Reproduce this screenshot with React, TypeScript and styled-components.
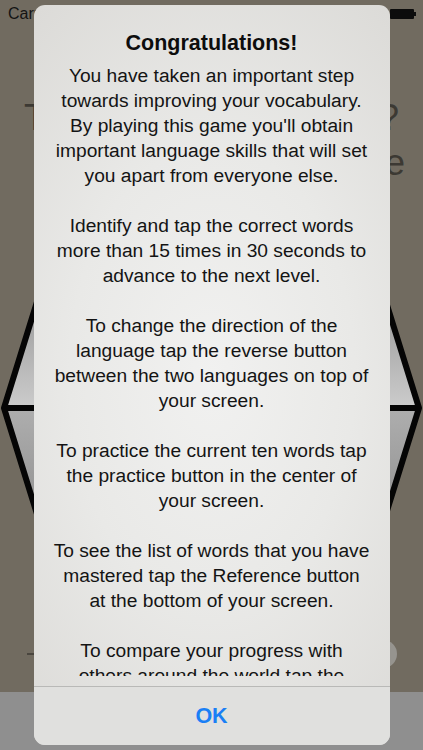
import React from 'react';
import styled, { createGlobalStyle } from 'styled-components';

const GlobalStyle = createGlobalStyle`
  html, body {
    margin: 0;
    padding: 0;
    overflow: hidden;
    background: #716b60;
  }
  #root {
    height: 750px;
  }
`;

const paragraphs = [
  "You have taken an important step\ntowards improving your vocabulary.\nBy playing this game you'll obtain\nimportant language skills that will set\nyou apart from everyone else.",
  'Identify and tap the correct words\nmore than 15 times in 30 seconds to\nadvance to the next level.',
  'To change the direction of the\nlanguage tap the reverse button\nbetween the two languages on top of\nyour screen.',
  'To practice the current ten words tap\nthe practice button in the center of\nyour screen.',
  'To see the list of words that you have\nmastered tap the Reference button\nat the bottom of your screen.',
  'To compare your progress with\nothers around the world tap the\nLeaderboard button at the bottom of\nyour screen.',
];

const Screen = styled.div`
  position: relative;
  width: 423px;
  height: 750px;
  display: flex;
  flex-direction: column;
  background: #716b60;
  font-family: 'Liberation Sans', Arial, sans-serif;
  overflow: hidden;
`;

const StatusBar = styled.div`
  height: 27px;
  display: flex;
  align-items: center;
  justify-content: space-between;
  padding: 0 7px 0 8px;
`;

const Carrier = styled.span`
  font-size: 16px;
  color: #141414;
`;

const Battery = styled.div`
  display: flex;
  align-items: center;
`;

const BatteryBody = styled.div`
  width: 24px;
  height: 10px;
  background: #0c0c0c;
  border-radius: 1px;
`;

const BatteryNub = styled.div`
  width: 2px;
  height: 4px;
  background: #0c0c0c;
`;

const Main = styled.div`
  flex: 1;
  display: flex;
  flex-direction: column;
`;

const PromptLine = styled.div<{ $top: number; $right: number; $align: string }>`
  margin-top: ${p => p.$top}px;
  padding: 0 ${p => p.$right}px 0 24px;
  display: flex;
  justify-content: ${p => p.$align};
  font-size: 36px;
  line-height: 45px;
  color: #3c3933;
`;

const HexRow = styled.div`
  margin-top: 83px;
  height: 280px;
  display: flex;
  justify-content: space-between;
`;

const ProgressRow = styled.div`
  margin-top: 92px;
  height: 28px;
  display: flex;
  align-items: center;
  padding: 0 26px 0 27px;
`;

const Track = styled.div`
  flex: 1;
  height: 2px;
  background: #4a463f;
`;

const Knob = styled.div`
  width: 28px;
  height: 28px;
  border-radius: 50%;
  background: #96948f;
`;

const TabBar = styled.div`
  height: 58px;
  background: #8f8f8f;
`;

const Overlay = styled.div`
  position: absolute;
  inset: 0;
  display: flex;
  justify-content: center;
  padding-top: 5px;
`;

const Alert = styled.div`
  width: 356px;
  height: 740px;
  border-radius: 11px;
  overflow: hidden;
  display: flex;
  flex-direction: column;
  background: radial-gradient(ellipse 80% 62% at 50% 50%, #f1f1f0 0%, #e9e9e7 50%, #dcdbd8 100%);
`;

const AlertBody = styled.div`
  flex: 1;
  min-height: 0;
  display: flex;
  flex-direction: column;
  padding: 25px 12px 10px;
`;

const Title = styled.div`
  font-size: 21.5px;
  line-height: 26px;
  font-weight: 700;
  text-align: center;
  color: #0d0d0d;
  margin-bottom: 6.5px;
`;

const Message = styled.div`
  flex: 1;
  min-height: 0;
  overflow: hidden;
`;

const Paragraph = styled.p`
  margin: 0 0 25px;
  font-size: 19.2px;
  line-height: 25px;
  text-align: center;
  white-space: pre;
  color: #141414;
`;

const Separator = styled.div`
  height: 1px;
  background: #b9b9b7;
`;

const AlertButton = styled.button`
  height: 58px;
  border: 0;
  padding: 0;
  background: #e0e0de;
  font-family: inherit;
  font-size: 21.5px;
  font-weight: 700;
  color: #1a7ff5;
  cursor: pointer;
`;

const Hexagon = ({ side }: { side: 'left' | 'right' }) => {
  const w = 46;
  const tipX = side === 'left' ? 4 : w - 4;
  const baseX = side === 'left' ? w : 0;
  const id = `hex-${side}`;
  return (
    <svg width={w} height={280} viewBox={`0 0 ${w} 280`}>
      <defs>
        <linearGradient id={`${id}-up`} x1="0" y1="0" x2="0" y2="1">
          <stop offset="0" stopColor="#8d8d8d" />
          <stop offset="1" stopColor="#cccccc" />
        </linearGradient>
        <linearGradient id={`${id}-down`} x1="0" y1="0" x2="0" y2="1">
          <stop offset="0" stopColor="#aeaeae" />
          <stop offset="1" stopColor="#8a8a8a" />
        </linearGradient>
      </defs>
      <polygon points={`${tipX},140 ${baseX},5 ${baseX},140`} fill={`url(#${id}-up)`} />
      <polygon points={`${tipX},140 ${baseX},140 ${baseX},275`} fill={`url(#${id}-down)`} />
      <polyline
        points={`${baseX},5 ${tipX},140 ${baseX},275`}
        fill="none"
        stroke="#050505"
        strokeWidth={6}
        strokeLinejoin="round"
      />
      <line x1={tipX} y1={140} x2={baseX} y2={140} stroke="#050505" strokeWidth={6} />
    </svg>
  );
};

const App = () => {
  return (
    <>
      <GlobalStyle />
      <Screen>
        <StatusBar>
          <Carrier>Carrier</Carrier>
          <Battery>
            <BatteryBody />
            <BatteryNub />
          </Battery>
        </StatusBar>
        <Main>
          <PromptLine $top={68} $right={24} $align="space-between">
            <span>Tap</span>
            <span>words?</span>
          </PromptLine>
          <PromptLine $top={0} $right={18} $align="flex-end">
            <span>language</span>
          </PromptLine>
          <HexRow>
            <Hexagon side="left" />
            <Hexagon side="right" />
          </HexRow>
          <ProgressRow>
            <Track />
            <Knob />
          </ProgressRow>
        </Main>
        <TabBar />
        <Overlay>
          <Alert>
            <AlertBody>
              <Title>Congratulations!</Title>
              <Message>
                {paragraphs.map((text, i) => (
                  <Paragraph key={i}>{text}</Paragraph>
                ))}
              </Message>
            </AlertBody>
            <Separator />
            <AlertButton>OK</AlertButton>
          </Alert>
        </Overlay>
      </Screen>
    </>
  );
};

export default App;
